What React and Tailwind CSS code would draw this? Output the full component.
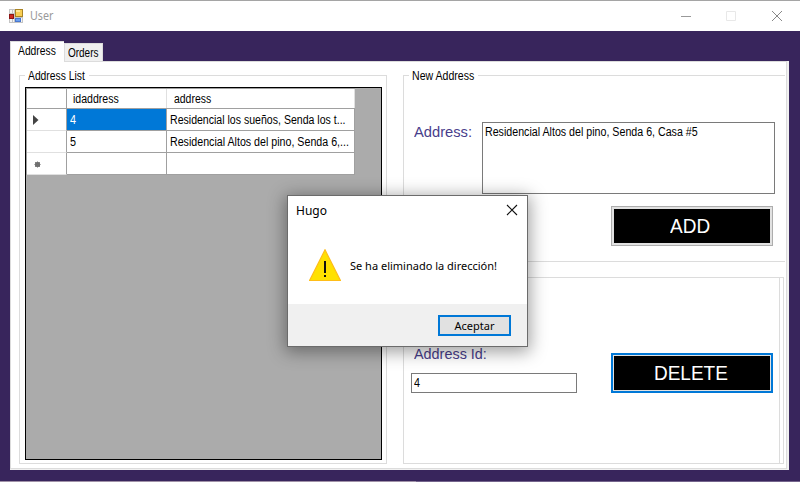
import React from 'react';

const small = 'block w-fit origin-left whitespace-nowrap text-[12px] leading-[14px]';

function AppIcon() {
  return (
    <svg width="14" height="14" viewBox="0 0 14 14" shapeRendering="crispEdges" className="block">
      <rect width="14" height="14" fill="#c4c4c4" />
      <rect x="1" y="1" width="2" height="3" fill="#f4f4f4" />
      <rect x="4" y="1" width="1" height="3" fill="#f4f4f4" />
      <rect x="1" y="10" width="2" height="3" fill="#f4f4f4" />
      <rect x="4" y="10" width="1" height="3" fill="#f4f4f4" />
      <rect x="12" y="9" width="1" height="4" fill="#f4f4f4" />
      <rect x="0" y="5" width="5" height="5" fill="#8c1414" />
      <rect x="1" y="6" width="3" height="3" fill="#cf2b20" />
      <rect x="6" y="0" width="8" height="8" fill="#aa8424" />
      <rect x="7" y="1" width="6" height="6" fill="#f8ce54" />
      <rect x="7" y="1" width="4" height="2" fill="#ffe795" />
      <rect x="6" y="9" width="6" height="4" fill="#4876cf" />
      <rect x="7" y="10" width="4" height="2" fill="#6aa0f0" />
    </svg>
  );
}

function TitleBar() {
  return (
    <header className="flex h-[31px] items-center border-t border-[#a5a5a5] bg-white pl-[9px] pr-[17px]">
      <AppIcon />
      <span className="ml-[7px] origin-left scale-x-[.89] font-['Noto_Sans',sans-serif] text-[12px] leading-4 text-[#999]">User</span>
      <div className="ml-auto flex items-center gap-[35px]">
        <svg width="10" height="10" className="block"><path d="M0 5.5h10" stroke="#999" /></svg>
        <svg width="10" height="10" className="block"><path d="M.5 .5h9v9h-9z" fill="none" stroke="#e8e8e8" /></svg>
        <svg width="12" height="12" viewBox="0 0 12 12" className="block"><path d="M1 1l10 10M11 1L1 11" stroke="#888" /></svg>
      </div>
    </header>
  );
}

function Group({ title, titleClass = '', className = '', children }) {
  return (
    <section className={'border border-[#dcdcdc] ' + className}>
      {title && (
        <h2 className="-mt-[7px] ml-[5px] h-[14px] w-fit bg-white px-[3px]">
          <span className={small + ' ' + titleClass}>{title}</span>
        </h2>
      )}
      {children}
    </section>
  );
}

function Row({ marker, id, address, selected, addressClass = '' }) {
  return (
    <div className="flex h-[22px]">
      <div className="flex w-[40px] items-center border-b border-r border-b-[#e0e0e0] border-r-[#a0a0a0] bg-white pl-[6px]">{marker}</div>
      <div className={'w-[100px] border-b border-r border-[#a0a0a0] pl-[3px] pt-[4px] ' + (selected ? 'bg-[#0078d7] text-white' : 'bg-white')}>
        <span className={small + ' scale-x-[.9]'}>{id}</span>
      </div>
      <div className="w-[188px] border-b border-r border-[#a0a0a0] bg-white pl-[3px] pt-[4px]">
        <span className={small + ' ' + addressClass}>{address}</span>
      </div>
    </div>
  );
}

function AddressGrid() {
  return (
    <div className="ml-[5px] mt-[4px] h-[373px] w-[357px] border border-black bg-[#ababab]">
      <div className="w-[329px] border-l border-t border-[#a0a0a0]">
        <div className="flex h-[20px] border-b border-[#a0a0a0] bg-white">
          <div className="w-[40px] border-r border-[#a0a0a0]" />
          <div className="w-[100px] border-r border-[#e0e0e0] pl-[6px] pt-[3px]">
            <span className={small + ' scale-x-[.88]'}>idaddress</span>
          </div>
          <div className="w-[188px] border-r border-[#e0e0e0] pl-[7px] pt-[3px]">
            <span className={small + ' scale-x-[.87]'}>address</span>
          </div>
        </div>
        <Row
          selected
          id="4"
          address="Residencial los sueños, Senda los t..."
          addressClass="scale-x-[.88]"
          marker={<svg width="6" height="10" className="block"><path d="M0 0L5.5 5L0 10z" fill="#444" /></svg>}
        />
        <Row id="5" address="Residencial Altos del pino, Senda 6,..." addressClass="scale-x-[.888]" />
        <Row
          id=""
          address=""
          marker={<svg width="7" height="7" className="ml-px mt-px block"><circle cx="3.5" cy="3.5" r="2.5" fill="#505050" /><path d="M3.5 .5v6M.5 3.5h6M1.2 1.2l4.6 4.6M5.8 1.2L1.2 5.8" stroke="#707070" strokeWidth="1" /></svg>}
        />
      </div>
    </div>
  );
}

function Dialog() {
  return (
    <div className="absolute left-[287px] top-[195px] flex h-[152px] w-[241px] flex-col border border-[#6b6b6b] bg-white font-['Noto_Sans',sans-serif] shadow-[0_3px_16px_2px_rgba(0,0,0,0.38)]">
      <div className="flex h-[30px] items-center justify-between pl-[8px] pr-[9px]">
        <span className="text-[12px] leading-4">Hugo</span>
        <svg width="12" height="12" viewBox="0 0 12 12" className="-mt-[2px] block"><path d="M1 1l10 10M11 1L1 11" stroke="#111" strokeWidth="1.1" /></svg>
      </div>
      <div className="flex h-[78px] items-start pl-[21px] pt-[23px]">
        <svg width="32" height="33" viewBox="0 0 32 33" className="block">
          <path d="M16 .8L31.4 31.5H.6z" fill="#ffe100" stroke="#ffbd18" strokeWidth="1.2" />
          <path d="M15 12h2v12h-2zM15 26h2v2h-2z" fill="#111" />
        </svg>
        <span className="ml-[9px] mt-[9px] whitespace-nowrap text-[11px] leading-4">Se ha eliminado la dirección!</span>
      </div>
      <div className="flex flex-1 items-start justify-end bg-[#f0f0f0] pr-[16px] pt-[11px]">
        <button className="h-[21px] w-[73px] border-2 border-[#0078d7] bg-[#e1e1e1] text-[11px] leading-[17px]">Aceptar</button>
      </div>
    </div>
  );
}

export default function App() {
  return (
    <div className="relative flex h-[482px] w-[800px] flex-col overflow-hidden bg-[#38255c] font-['Liberation_Sans',Arial,sans-serif] text-black">
      <TitleBar />
      <nav className="z-10 flex h-[30px] items-end pl-[10px]">
        <div className="-mb-px h-[21px] w-[54px] border-l border-t border-[#dcdcdc] bg-white pl-[7px] pt-[2px]">
          <span className={small + ' scale-x-[.86]'}>Address</span>
        </div>
        <div className="h-[18px] w-[39px] border border-b-0 border-[#dcdcdc] bg-[#f0f0f0] pl-[3px] pt-[2px]">
          <span className={small + ' scale-x-[.83]'}>Orders</span>
        </div>
      </nav>
      <main className="ml-[10px] h-[409px] w-[779px] bg-[#f0f0f0] pb-px pr-[2px]">
        <div className="flex h-[408px] w-[777px] border border-[#dcdcdc] bg-white pl-[8px] pt-[13px]">
          <Group title="Address List" titleClass="scale-x-[.86] -mr-[8px]" className="h-[389px] w-[368px]">
            <AddressGrid />
          </Group>
          <div className="ml-[16px] flex w-[382px] flex-col">
            <Group title="New Address" titleClass="scale-x-[.88] -mr-[8px]" className="h-[187px] w-[382px] border-r-0">
              <div className="mt-[39px] flex pl-[10px]">
                <label className="w-[68px] origin-left scale-x-[.98] whitespace-nowrap pt-px text-[15px] leading-[18px] text-[#483d8b]">Address:</label>
                <div className="h-[72px] w-[293px] border border-[#7a7a7a] pl-[2px] pt-[2px]">
                  <span className={small + ' scale-x-[.888]'}>Residencial Altos del pino, Senda 6, Casa #5</span>
                </div>
              </div>
              <button className="ml-[207px] mt-[12px] block h-[40px] w-[162px] border border-[#adadad] bg-[#e1e1e1] p-[2px]">
                <span className="flex h-full items-center justify-center bg-black pr-[3px] text-white">
                  <span className="scale-x-[.95] text-[20px]">ADD</span>
                </span>
              </button>
            </Group>
            <Group className="mt-[15px] flex h-[187px] w-[381px]">
              <div className="flex w-[376px] border-r border-[#dcdcdc]">
                <div className="w-[207px] pl-[7px] pt-[67px]">
                  <label className="ml-[3px] block w-fit origin-left scale-x-[.96] whitespace-nowrap text-[15px] leading-[18px] text-[#483d8b]">Address Id:</label>
                  <div className="mt-[10px] h-[20px] w-[166px] border border-[#7a7a7a] pl-[2px] pt-[2px]">
                    <span className={small + ' scale-x-[.9]'}>4</span>
                  </div>
                </div>
                <button className="mt-[75px] block h-[40px] w-[162px] border-2 border-[#0078d7] bg-[#e1e1e1] p-px">
                  <span className="flex h-full items-center justify-center bg-black pr-[2px] text-white">
                    <span className="scale-x-[.95] text-[20px]">DELETE</span>
                  </span>
                </button>
              </div>
            </Group>
          </div>
        </div>
      </main>
      <div className="mt-auto flex h-px">
        <div className="w-[416px] bg-[#a092a8]" />
        <div className="flex-1 bg-[#74648c]" />
      </div>
      <Dialog />
    </div>
  );
}
